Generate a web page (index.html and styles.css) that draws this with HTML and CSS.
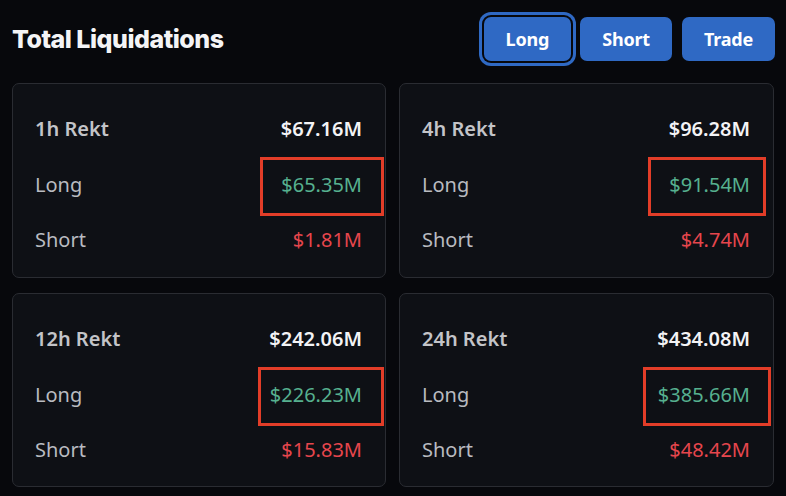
FILE: index.html
```html
<!DOCTYPE html>
<html>
<head>
<meta charset="utf-8">
<link rel="stylesheet" href="styles.css">
</head>
<body>
<div class="page">
  <header class="header">
    <h1 class="title">Total Liquidations</h1>
    <div class="tabs">
      <button class="btn btn-active">Long</button>
      <button class="btn">Short</button>
      <button class="btn">Trade</button>
    </div>
  </header>
  <div class="grid">
    <section class="card">
      <div class="row"><span class="head-label">1h Rekt</span><span class="head-value">$67.16M</span></div>
      <div class="row"><span class="label">Long</span><span class="val long">$65.35M<i class="mark mark-1"></i></span></div>
      <div class="row"><span class="label">Short</span><span class="val short">$1.81M</span></div>
    </section>
    <section class="card">
      <div class="row"><span class="head-label">4h Rekt</span><span class="head-value">$96.28M</span></div>
      <div class="row"><span class="label">Long</span><span class="val long">$91.54M<i class="mark mark-2"></i></span></div>
      <div class="row"><span class="label">Short</span><span class="val short">$4.74M</span></div>
    </section>
    <section class="card">
      <div class="row"><span class="head-label">12h Rekt</span><span class="head-value">$242.06M</span></div>
      <div class="row"><span class="label">Long</span><span class="val long">$226.23M<i class="mark mark-3"></i></span></div>
      <div class="row"><span class="label">Short</span><span class="val short">$15.83M</span></div>
    </section>
    <section class="card">
      <div class="row"><span class="head-label">24h Rekt</span><span class="head-value">$434.08M</span></div>
      <div class="row"><span class="label">Long</span><span class="val long">$385.66M<i class="mark mark-4"></i></span></div>
      <div class="row"><span class="label">Short</span><span class="val short">$48.42M</span></div>
    </section>
  </div>
</div>
</body>
</html>
```
FILE: styles.css
```css
* { box-sizing: border-box; }
html, body {
  margin: 0;
  padding: 0;
  background: #07080c;
}
body {
  width: 786px;
  height: 496px;
  overflow: hidden;
  font-family: "Noto Sans", "Open Sans", sans-serif;
}
.page {
  padding: 0 11px 0 12px;
}
.header {
  height: 83px;
  display: flex;
  align-items: center;
  justify-content: space-between;
  padding-bottom: 6px;
}
.title {
  margin: 0;
  font-family: Inter, "Liberation Sans", sans-serif;
  font-weight: 800;
  font-size: 25px;
  letter-spacing: -0.5px;
  color: #f4f4f6;
}
.tabs {
  display: flex;
  gap: 10px;
}
.btn {
  height: 44px;
  padding: 0 22px;
  border: none;
  border-radius: 7px;
  background: #2f69c4;
  color: #ffffff;
  font-family: "Noto Sans", sans-serif;
  font-weight: 700;
  font-size: 18px;
  letter-spacing: -0.2px;
}
.btn-active {
  box-shadow: 0 0 0 2px #07080c, 0 0 0 5px #2f69c4;
  margin-right: -1px;
}
.grid {
  display: grid;
  grid-template-columns: 374px 375px;
  grid-template-rows: 195px 194px;
  column-gap: 13px;
  row-gap: 15px;
}
.card {
  background: #0e1015;
  border: 1px solid #2a2c32;
  border-radius: 7px;
  padding: 17px 23px 8px 22px;
  display: flex;
  flex-direction: column;
}
.row {
  height: 55.5px;
  flex: none;
  display: flex;
  align-items: center;
  justify-content: space-between;
  font-size: 20px;
}
.head-label {
  color: #c3c4c8;
  font-weight: 600;
}
.head-value {
  color: #f3f3f5;
  font-weight: 600;
}
.label {
  color: #b9bbc0;
}
.val {
  position: relative;
}
.long { color: #56b08f; }
.short { color: #e6464d; }
.mark {
  position: absolute;
  border: 3px solid #e23d28;
  top: -14px;
  bottom: -18px;
}
.mark-1 { left: -21px; right: -22px; }
.mark-2 { left: -21px; right: -16px; }
.mark-3 { left: -12px; right: -22px; }
.mark-4 { left: -15px; right: -21px; }
```
